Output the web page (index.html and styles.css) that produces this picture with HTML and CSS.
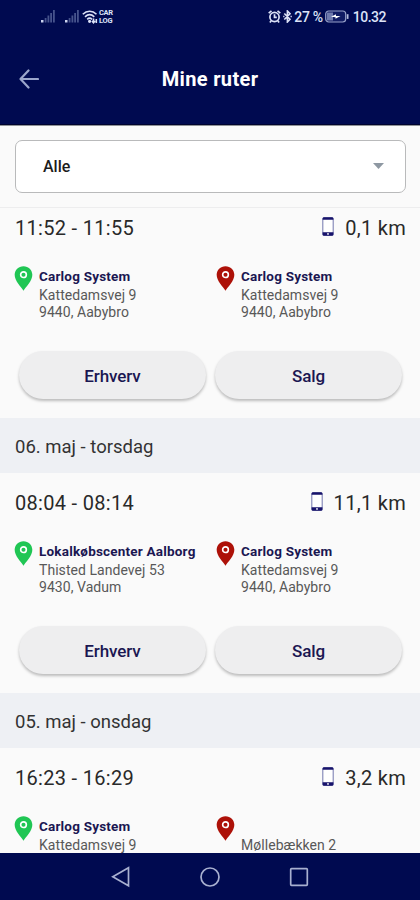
FILE: index.html
```html
<!DOCTYPE html>
<html lang="da">
<head>
<meta charset="utf-8">
<title>Mine ruter</title>
<link rel="stylesheet" href="styles.css">
</head>
<body>
<svg width="0" height="0" class="defs">
  <symbol id="pin" viewBox="0 0 20 27"><path fill="currentColor" d="M10 .5C4.700.5.7 4.500.7 9.600c0 6.500 6.500 12.500 9.300 16.800 2.800-4.300 9.300-10.300 9.300-16.800C19.300 4.500 15.300.5 10 .5z"/><circle cx="10" cy="9.500" r="3" fill="none" stroke="#fff" stroke-width="1.700"/></symbol>
  <symbol id="phone" viewBox="0 0 12 19"><rect x=".8" y=".8" width="10.400" height="17.400" rx="1.300" fill="#fff" stroke="#7f83b5" stroke-width="1.100"/><path fill="#17136b" d="M1.500.2h9l.9 1v1.600H.6V1.200zM.6 15.200h10.800v2.500l-.9 1h-9l-.9-1z"/><circle cx="6" cy="16.900" r=".9" fill="#fff"/></symbol>
  <symbol id="signal" viewBox="0 0 14 13"><path fill="#cbd3ee" d="M0 10h2.500v2.500H0z"/><path fill="#46538c" d="M3.700 8h1.800v4.500H3.700zM6.500 5.500h1.800v7H6.500zM9.200 3H11v9.500H9.200zM12 0h1.800v12.500H12z"/></symbol>
</svg>
<div class="screen">
  <div class="status">
    <div class="status-left">
      <svg class="signal" viewBox="0 0 14 13"><use href="#signal"/></svg>
      <svg class="signal second" viewBox="0 0 14 13"><use href="#signal"/></svg>
      <svg class="wifi" viewBox="0 0 16 14" fill="none" stroke="#dce2f7" stroke-width="1.600"><path d="M.8 4.200C4.800.2 10.500.2 14.500 4.200M3 6.800c2.800-2.600 6.500-2.600 9.300 0M5.200 9.300c1.400-1.300 3.400-1.300 4.800 0"/><circle cx="7.600" cy="11.300" r=".8"/><path d="M11.500 8.500v4M9.900 11l1.600 1.700L13 11M14.300 13V9"/></svg>
      <div class="carrier"><span>CAR</span><span>LOG</span></div>
    </div>
    <div class="status-right">
      <svg class="alarm" viewBox="0 0 13 13" fill="none" stroke="#dce2f7" stroke-width="1.700"><circle cx="6.500" cy="7" r="4.600"/><path d="M.7 3.200 3.500.9M12.300 3.200 9.500.9M6.500 4.300V7.300h2.300M3.200 10.700l-1.300 1.700M9.800 10.700l1.300 1.700"/></svg>
      <svg class="bluetooth" viewBox="0 0 9 13" fill="none" stroke="#dce2f7" stroke-width="1.600"><path d="M1.300 3.500 7 9.200 4.400 12V1L7 3.800 1.300 9.500M.2 6.500h1.300M7.500 6.500h1.300"/></svg>
      <span class="percent">27 %</span>
      <svg class="battery" viewBox="0 0 24 13"><rect x=".7" y="1" width="20" height="11" rx="3" fill="#101b63" stroke="#97a1c9" stroke-width="1.200"/><path fill="#707bae" d="M2 2.500h6v8H2z"/><path fill="#fff" d="m6 6.700 5-2.500v1.700h4.500l-5 2.900V7.200z"/><path fill="#b6bedd" d="M21.800 4.200H23.500v4.700h-1.700z"/></svg>
      <span class="clock">10.32</span>
    </div>
  </div>
  <header class="header">
    <svg class="back" viewBox="0 0 20 20" fill="none" stroke="#9ba6cb" stroke-width="2.200" stroke-linecap="round" stroke-linejoin="round"><path d="M9.500 1.500 1.500 10l8 8.500M1.500 10H19"/></svg>
    <h1>Mine ruter</h1>
  </header>
  <div class="filter">
    <div class="select"><span>Alle</span><svg class="caret" viewBox="0 0 11 6"><path fill="#8e98a2" d="M0 0h11L5.500 6z"/></svg></div>
  </div>
  <main class="list">
    <section class="trip">
      <div class="summary"><span class="time">11:52 - 11:55</span><svg class="phone"><use href="#phone"/></svg><span class="km">0,1 km</span></div>
      <div class="stops">
        <div class="stop"><svg class="pin start"><use href="#pin"/></svg><div><b>Carlog System</b><p>Kattedamsvej 9</p><p>9440, Aabybro</p></div></div>
        <div class="stop"><svg class="pin end"><use href="#pin"/></svg><div><b>Carlog System</b><p>Kattedamsvej 9</p><p>9440, Aabybro</p></div></div>
      </div>
      <div class="actions"><button>Erhverv</button><button>Salg</button></div>
    </section>
    <h2 class="day">06. maj - torsdag</h2>
    <section class="trip">
      <div class="summary"><span class="time">08:04 - 08:14</span><svg class="phone"><use href="#phone"/></svg><span class="km">11,1 km</span></div>
      <div class="stops">
        <div class="stop"><svg class="pin start"><use href="#pin"/></svg><div><b>Lokalkøbscenter Aalborg</b><p>Thisted Landevej 53</p><p>9430, Vadum</p></div></div>
        <div class="stop"><svg class="pin end"><use href="#pin"/></svg><div><b>Carlog System</b><p>Kattedamsvej 9</p><p>9440, Aabybro</p></div></div>
      </div>
      <div class="actions"><button>Erhverv</button><button>Salg</button></div>
    </section>
    <h2 class="day">05. maj - onsdag</h2>
    <section class="trip">
      <div class="summary"><span class="time">16:23 - 16:29</span><svg class="phone"><use href="#phone"/></svg><span class="km">3,2 km</span></div>
      <div class="stops">
        <div class="stop"><svg class="pin start"><use href="#pin"/></svg><div><b>Carlog System</b><p>Kattedamsvej 9</p></div></div>
        <div class="stop"><svg class="pin end"><use href="#pin"/></svg><div><b></b><p>Møllebækken 2</p></div></div>
      </div>
    </section>
  </main>
  <nav class="nav">
    <svg viewBox="0 0 20 22"><path d="M17.500 1.800v18L1.800 10.800z"/></svg>
    <svg viewBox="0 0 20 22"><circle cx="10" cy="11" r="9"/></svg>
    <svg viewBox="0 0 20 22"><rect x="1.700" y="2.700" width="16.600" height="16.600" rx=".8"/></svg>
  </nav>
</div>
</body>
</html>
```
FILE: styles.css
```css
* { box-sizing: border-box; }
body { margin: 0; font-family: Roboto, "Liberation Sans", sans-serif; background: #fafafa; color: #292929; }
h1, h2, p { margin: 0; }
.defs { display: block; }
.screen { width: 420px; height: 900px; display: flex; flex-direction: column; overflow: hidden; }
.status { height: 33px; flex: none; background: #000a50; color: #dce2f7; display: flex; justify-content: space-between; padding: 0 34px 0 41px; font-size: 14px; }
.status-left, .status-right { display: flex; align-items: center; }
.signal { width: 14px; height: 13px; }
.second { margin-left: 10px; }
.wifi { width: 16px; height: 14px; margin-left: 3px; }
.carrier { display: flex; flex-direction: column; margin-left: 1px; font-size: 7.500px; font-weight: 700; line-height: 8px; letter-spacing: -.3px; }
.alarm { width: 13px; height: 13px; }
.bluetooth { width: 9px; height: 13px; margin: 0 2px; }
.percent { font-size: 14px; font-weight: 500; letter-spacing: -.3px; }
.battery { width: 24px; height: 13px; margin: 0 4px 0 2px; }
.clock { font-weight: 500; letter-spacing: -.5px; }
.header { height: 92px; flex: none; background: #000a50; border-bottom: 1px solid #00032f; padding: 0 19px; display: grid; grid-template-columns: 20px 1fr 20px; align-items: center; }
.back { width: 20px; height: 20px; }
h1 { color: #fff; font-size: 20px; line-height: 24px; font-weight: 700; text-align: center; letter-spacing: .35px; padding-top: 1px; }
.filter { height: 83px; flex: none; padding: 14px 14px 0 15px; border-top: 1px solid #909397; border-bottom: 1px solid #ededee; }
.select { height: 53px; background: #fff; border: 1px solid #b9babb; border-radius: 7px; display: flex; align-items: center; justify-content: space-between; padding: 0 21px 0 27px; font-size: 16px; font-weight: 500; color: #1c1c1c; }
.caret { width: 11px; height: 6px; margin-top: -1px; }
.list { flex: 1; min-height: 0; overflow: hidden; }
.trip { height: 220px; padding: 18px 14px 0 15px; }
.trip:first-child { margin-top: -10px; }
.summary { height: 24px; display: flex; align-items: center; font-size: 20px; }
.time { flex: 1; letter-spacing: .3px; }
.phone { width: 12px; height: 19px; margin-right: 11px; margin-top: -4px; }
.km { letter-spacing: .3px; }
.stops { display: grid; grid-template-columns: 202px 1fr; height: 67px; margin-top: 26px; }
.stop { display: flex; gap: 5px; margin-left: -1px; }
.pin { width: 19px; height: 27px; flex: none; margin: -1px 1px 0 0; }
.start { color: #20c654; }
.end { color: #ad1108; }
.stop b { display: block; height: 21px; line-height: 21px; font-size: 13.500px; font-weight: 700; color: #1b1752; letter-spacing: .2px; white-space: nowrap; }
.stop p { font-size: 14px; line-height: 16.500px; color: #585858; letter-spacing: .05px; white-space: nowrap; }
.actions { display: flex; gap: 9px; padding: 0 4px; margin-top: 18px; }
button { flex: 1; height: 48px; padding: 2px 0 0; border: 0; border-radius: 24px; background: #eeeeef; color: #1b1752; font: 500 17px Roboto, "Liberation Sans", sans-serif; letter-spacing: -.1px; box-shadow: 0 2px 3px rgba(0,0,0,.25); }
.day { height: 55px; padding-left: 15px; background: #eef0f4; font-size: 18.500px; line-height: 59px; font-weight: 400; color: #333; }
.nav { height: 47px; flex: none; background: #000a50; display: flex; justify-content: center; align-items: center; gap: 69px; }
.nav svg { width: 20px; height: 22px; fill: none; stroke: #a8b0d0; stroke-width: 1.700; }
```
